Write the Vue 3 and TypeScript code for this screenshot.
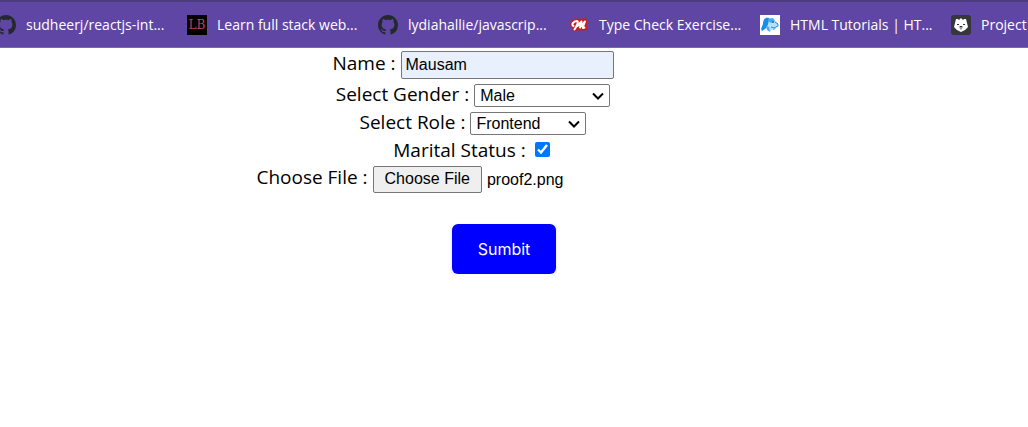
<script setup lang="ts">
import { onMounted, ref } from 'vue'

interface Bookmark {
  title: string
  icon: 'github' | 'lb' | 'script' | 'dog' | 'bear'
}

const bookmarks: Bookmark[] = [
  { title: 'sudheerj/reactjs-int...', icon: 'github' },
  { title: 'Learn full stack web...', icon: 'lb' },
  { title: 'lydiahallie/javascrip...', icon: 'github' },
  { title: 'Type Check Exercise...', icon: 'script' },
  { title: 'HTML Tutorials | HT...', icon: 'dog' },
  { title: 'Project', icon: 'bear' },
]

const name = ref('Mausam')
const gender = ref('Male')
const role = ref('Frontend')
const married = ref(true)
const fileInput = ref<HTMLInputElement | null>(null)

onMounted(() => {
  const transfer = new DataTransfer()
  transfer.items.add(new File([''], 'proof2.png', { type: 'image/png' }))
  if (fileInput.value) fileInput.value.files = transfer.files
})
</script>

<template>
  <div class="page">
    <nav class="bookmarks" aria-label="Bookmarks">
      <a v-for="item in bookmarks" :key="item.title" class="bookmark" href="#">
        <svg v-if="item.icon === 'github'" class="icon" viewBox="0 0 16 16" aria-hidden="true">
          <path fill="#24292e" d="M8 0C3.58 0 0 3.58 0 8c0 3.54 2.29 6.53 5.47 7.59.4.07.55-.17.55-.38 0-.19-.01-.82-.01-1.49-2.01.37-2.53-.49-2.69-.94-.09-.23-.48-.94-.82-1.13-.28-.15-.68-.52-.01-.53.63-.01 1.08.58 1.23.82.72 1.21 1.87.87 2.33.66.07-.52.28-.87.51-1.07-1.78-.2-3.64-.89-3.64-3.95 0-.87.31-1.59.82-2.15-.08-.2-.36-1.02.08-2.12 0 0 .67-.21 2.2.82.64-.18 1.32-.27 2-.27s1.36.09 2 .27c1.53-1.04 2.2-.82 2.2-.82.44 1.1.16 1.92.08 2.12.51.56.82 1.27.82 2.15 0 3.07-1.87 3.75-3.65 3.95.29.25.54.73.54 1.48 0 1.07-.01 1.93-.01 2.2 0 .21.15.46.55.38A8.01 8.01 0 0 0 16 8c0-4.42-3.58-8-8-8z" />
        </svg>
        <span v-else-if="item.icon === 'lb'" class="icon lb" aria-hidden="true">LB</span>
        <svg v-else-if="item.icon === 'script'" class="icon" viewBox="0 0 20 20" aria-hidden="true">
          <g fill="none" stroke-linecap="round" stroke-linejoin="round">
            <path stroke="#c3201f" stroke-width="5" d="M5 11C2 10 4 6 9 6L6 14L13 6L11 13L16 6L14 13L16 13" />
            <path stroke="#fff" stroke-width="2" d="M4.500 11C2 10 4 6 8 6C10 6 8 11 5.500 14.500M8.500 11L12.500 6.500L11 12.500L16 6.500C15 9 13.500 12 14 13L15.500 12.500" />
          </g>
        </svg>
        <svg v-else-if="item.icon === 'dog'" class="icon" viewBox="0 0 20 20" aria-hidden="true">
          <path fill="#fff" d="M0 0H20V20H0Z" />
          <path fill="#b9def9" d="M7 4C10 2 14 3 15 6L18 9L17 12L13 13L10 17L6 11Z" />
          <path fill="#168eea" d="M9 3C5 2 3 5 3 9L1 14L2 16L5 14C8 12 8 8 9 5Z" />
          <path fill="#47aaf4" d="M8 4L13 3L15 6L12 8L9 7ZM6 11L9 12L10 17L7 15ZM12 14L16 13L14 15Z" />
          <circle cx="13" cy="7" r="1" fill="#0873cf" />
          <path fill="none" stroke="#168eea" stroke-width="1" d="M15 7L18 9L18 11L14 13L11 12" />
        </svg>
        <svg v-else class="icon" viewBox="0 0 20 20" aria-hidden="true">
          <rect width="20" height="20" rx="3" fill="#363738" />
          <path fill="#fff" d="M5 4L7 4L8 5L10 3L12 5L13 4L15 4L16 8L17 12L14 15L10 17L6 15L3 12L4 8Z" />
          <path fill="#999" d="M8 11H12L11 14L10 15L9 14Z" />
          <path fill="#333" d="M6 9H8V10H6ZM12 9H14V10H12ZM9 11H11V12H9Z" />
        </svg>
        <span>{{ item.title }}</span>
      </a>
    </nav>

    <form class="form" @submit.prevent>
      <div class="row">
        <label for="name">Name :</label>
        <input id="name" v-model="name" class="text" type="text" />
      </div>
      <div class="row">
        <label for="gender">Select Gender :</label>
        <select id="gender" v-model="gender" class="gender">
          <option>Male</option>
          <option>Female</option>
        </select>
      </div>
      <div class="row">
        <label for="role">Select Role :</label>
        <select id="role" v-model="role" class="role">
          <option>Frontend</option>
          <option>Backend</option>
        </select>
      </div>
      <div class="row">
        <label for="married">Marital Status :</label>
        <input id="married" v-model="married" class="check" type="checkbox" />
      </div>
      <div class="row">
        <label for="file">Choose File :</label>
        <input id="file" ref="fileInput" class="file" type="file" />
      </div>
      <button class="submit" type="submit">Sumbit</button>
    </form>
  </div>
</template>

<style>
body {
  margin: 0;
  background: #fff;
}
</style>

<style scoped>
.page {
  font-family: "Open Sans", "Noto Sans", sans-serif;
  color: #000;
}

.bookmarks {
  box-sizing: border-box;
  display: flex;
  align-items: center;
  height: 48px;
  margin-bottom: 3px;
  overflow: hidden;
  border-top: 2px solid #4d3b80;
  border-bottom: 1px solid #7d63b8;
  background: #5f45a4;
}

.bookmark {
  display: flex;
  flex: 0 0 191px;
  align-items: center;
  gap: 10px;
  color: #fff;
  font-size: 14px;
  line-height: 20px;
  text-decoration: none;
  white-space: nowrap;
}

.bookmark:first-child {
  margin-left: -4px;
}

.bookmark:last-child {
  flex: none;
}

.icon {
  flex: none;
  width: 20px;
  height: 20px;
}

.lb {
  background: #000;
  color: #c73b5b;
  font-family: "DejaVu Serif", serif;
  font-size: 12px;
  text-align: center;
}

.form {
  display: flex;
  flex-direction: column;
  align-items: center;
  gap: 3px;
  padding-right: 82px;
}

.row {
  display: flex;
  align-items: baseline;
  justify-content: center;
  gap: 5px;
  font-size: 19px;
  line-height: 24px;
}

.row input,
.row select {
  box-sizing: border-box;
  margin: 0;
  color: #000;
  font-family: "Liberation Sans", Arial, sans-serif;
  font-size: 16px;
}

.text {
  width: 213px;
  height: 28px;
  padding: 1px 4px;
  border: 1px solid #767676;
  border-radius: 2px;
  background: #e8f0fe;
}

.row select {
  appearance: none;
  height: 23px;
  padding: 0 5px;
  border: 1px solid #767676;
  border-radius: 2px;
  background: #fff url("data:image/svg+xml,%3Csvg xmlns='http://www.w3.org/2000/svg' width='12' height='8' viewBox='0 0 12 8'%3E%3Cpath d='M1 1.500L6 6.500L11 1.500' fill='none' stroke='black' stroke-width='2'/%3E%3C/svg%3E") no-repeat right 5px center;
}

.gender {
  width: 136px;
}

.role {
  width: 116px;
}

.row .check {
  width: 15px;
  height: 15px;
  margin: 0 3px 1px 4px;
  accent-color: #0075ff;
}

.file {
  width: 317px;
}

.file::file-selector-button {
  height: 27px;
  margin-right: 5px;
  padding: 0 11px;
  border: 1px solid #767676;
  border-radius: 2px;
  background: #efefef;
  color: #000;
}

.submit {
  height: 50px;
  margin: 28px 0 0 62px;
  padding: 0 26px;
  border: 0;
  border-radius: 6px;
  background: #00f;
  box-shadow: 0 2px 4px rgba(0, 0, 0, 0.12);
  color: #fff;
  font-family: Inter, sans-serif;
  font-size: 16px;
  line-height: 24px;
}
</style>
